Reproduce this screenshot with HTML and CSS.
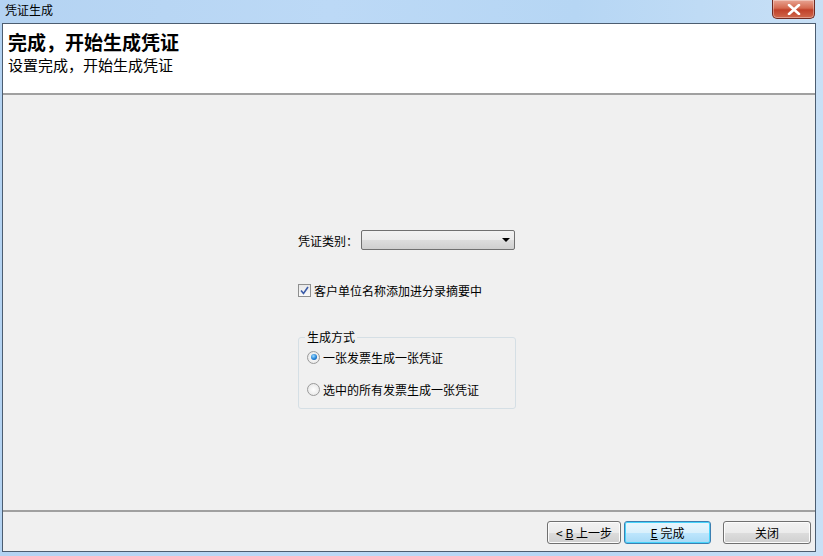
FILE: index.html
```html
<!DOCTYPE html>
<html lang="zh">
<head>
    <meta charset="UTF-8">
    <title>凭证生成</title>
<link rel="stylesheet" href="styles.css">
</head>
<body>
    <div class="window">
        <div class="titlebar">
            <span class="title">凭证生成</span>
            <div class="close">
                <svg width="14" height="11" viewBox="0 0 14 11"><path d="M2 1 L12 10 M12 1 L2 10" stroke="#fff" stroke-width="2.6" stroke-linecap="round"/></svg>
            </div>
        </div>
        <div class="client">
            <div class="header">
                <h1>完成，开始生成凭证</h1>
                <p>设置完成，开始生成凭证</p>
            </div>
            <div class="main">
                <div class="form">
                    <div class="row">
                        <span class="label">凭证类别：</span>
                        <div class="combo"><span class="arrow"></span></div>
                    </div>
                    <label class="check">
                        <span class="box">
                            <svg width="9" height="9" viewBox="0 0 9 9"><path d="M1 4.5 L3.5 7.5 L8 1" fill="none" stroke="#3a5ba8" stroke-width="1.6"/></svg>
                        </span>
                        客户单位名称添加进分录摘要中
                    </label>
                    <fieldset class="group">
                        <legend>生成方式</legend>
                        <div class="radio on"><span class="dot"></span>一张发票生成一张凭证</div>
                        <div class="radio"><span class="dot"></span>选中的所有发票生成一张凭证</div>
                    </fieldset>
                </div>
            </div>
            <div class="footer">
                <button class="btn back">&lt; <u>B</u> 上一步</button>
                <button class="btn finish"><u>E</u> 完成</button>
                <button class="btn close-btn">关闭</button>
            </div>
        </div>
    </div>
</body>
</html>
```
FILE: styles.css
```css
*{
    margin: 0;
    padding: 0;
    box-sizing: border-box;
}
body{
    width: 823px;
    height: 556px;
    overflow: hidden;
    font-family: "Noto Sans CJK SC", "DejaVu Sans", sans-serif;
    font-size: 12px;
    color: #000;
}
.window{
    width: 823px;
    height: 556px;
    display: flex;
    flex-direction: column;
    background: linear-gradient(90deg, #b4d3f2 0%, #bcd9f6 40%, #b6d6f4 70%, #c8e0f6 100%);
}
.titlebar{
    height: 23px;
    display: flex;
    align-items: flex-start;
    justify-content: space-between;
    padding: 0 8px 0 5px;
}
.title{
    line-height: 20px;
    font-size: 12px;
}
.close{
    width: 43px;
    height: 19px;
    border: 1px solid #6e2a22;
    border-top: none;
    border-radius: 0 0 5px 5px;
    background: linear-gradient(#e8a493 0%, #d56a50 45%, #c0412a 55%, #d0684c 100%);
    box-shadow: inset 0 0 0 1px rgba(255,255,255,0.35);
    display: flex;
    align-items: center;
    justify-content: center;
}
.client{
    flex: 1;
    margin: 0 7px 4px 2px;
    border: 1px solid #4c5d70;
    background: #f0f0f0;
    display: flex;
    flex-direction: column;
}
.header{
    height: 71px;
    background: #fff;
    border-bottom: 2px solid #a0a0a0;
    padding: 5px 5px 0;
}
.header h1{
    font-size: 19px;
    font-weight: bold;
    line-height: 25px;
}
.header p{
    font-size: 15px;
    line-height: 21px;
}
.main{
    flex: 1;
    display: flex;
    justify-content: center;
    padding-top: 135px;
}
.form{
    width: 218px;
    margin-left: -4px;
}
.row{
    display: flex;
    align-items: center;
    height: 20px;
}
.label{
    width: 63px;
}
.combo{
    width: 154px;
    height: 20px;
    border: 1px solid #707070;
    border-radius: 2px;
    background: linear-gradient(#f2f2f2 0%, #ebebeb 50%, #dddddd 51%, #cfcfcf 100%);
    position: relative;
}
.arrow{
    position: absolute;
    right: 4px;
    top: 7px;
    border-left: 4px solid transparent;
    border-right: 4px solid transparent;
    border-top: 4px solid #000;
}
.check{
    display: flex;
    align-items: center;
    margin-top: 34px;
    height: 12px;
    gap: 3px;
}
.box{
    width: 13px;
    height: 13px;
    border: 1px solid #8e8f8f;
    background: linear-gradient(#e8e8e8, #fafafa);
    display: flex;
    align-items: center;
    justify-content: center;
}
.group{
    margin-top: 34px;
    width: 218px;
    height: 79px;
    border: 1px solid #d5dfe5;
    border-radius: 3px;
    padding: 6px 0 0 8px;
}
.group legend{
    padding: 0 2px;
    margin-left: -2px;
    line-height: 14px;
}
.radio{
    display: flex;
    align-items: center;
    gap: 3px;
    height: 14px;
    margin-bottom: 18px;
}
.dot{
    width: 13px;
    height: 13px;
    border: 1px solid #9a9a9a;
    border-radius: 50%;
    background: radial-gradient(circle, #fff 0%, #e2e2e2 100%);
    position: relative;
}
.radio.on .dot::after{
    content: "";
    position: absolute;
    left: 2.5px;
    top: 2.5px;
    width: 6px;
    height: 6px;
    border-radius: 50%;
    background: radial-gradient(circle at 40% 35%, #9bdcff 0%, #1b7ad2 60%, #0c4e98 100%);
}
.footer{
    height: 41px;
    border-top: 2px solid #a0a0a0;
    display: flex;
    justify-content: flex-end;
    align-items: flex-start;
    padding: 9px 4px 0 0;
}
.btn{
    height: 23px;
    font-family: inherit;
    font-size: 12px;
    border: 1px solid #707070;
    border-radius: 3px;
    background: linear-gradient(#f2f2f2 0%, #ebebeb 50%, #dddddd 51%, #cfcfcf 100%);
    box-shadow: inset 0 0 0 1px #fcfcfc;
}
.btn u{
    text-decoration: underline;
}
.back{
    width: 74px;
}
.finish{
    width: 87px;
    margin-left: 3px;
    border-color: #3c7fb1;
    box-shadow: inset 0 0 0 1px #48d4fb;
    background: linear-gradient(#eaf6fd 0%, #d9f0fc 50%, #bee6fd 51%, #a7d9f5 100%);
}
.close-btn{
    width: 88px;
    margin-left: 12px;
}
```
